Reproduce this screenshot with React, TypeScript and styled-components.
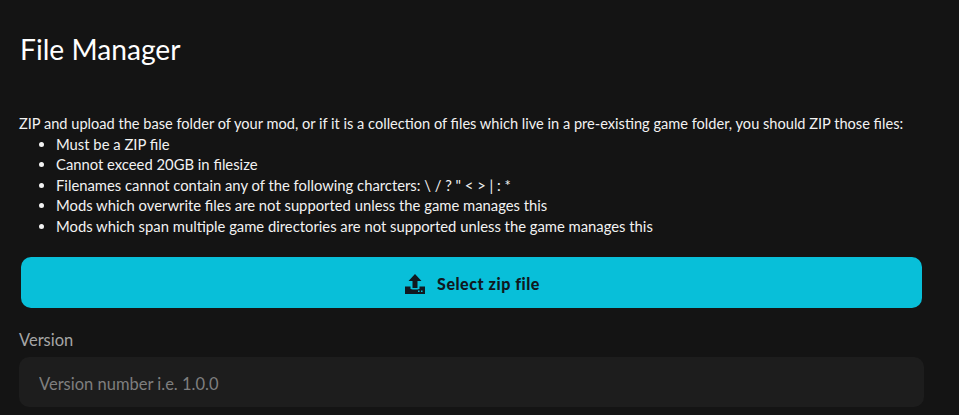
import styled, { createGlobalStyle } from "styled-components";

const GlobalStyle = createGlobalStyle`
  html, body {
    margin: 0;
    height: 100%;
    overflow: hidden;
    background: #141414;
  }
  body {
    font-family: Lato, "Liberation Sans", sans-serif;
    color: #fff;
  }
`;

const Page = styled.div`
  display: flex;
  flex-direction: column;
  padding: 30px 35px 0 19px;
`;

const Title = styled.h1`
  margin: 0 0 0 1px;
  font-size: 28.2px;
  line-height: 38px;
  font-weight: 400;
  color: #fff;
`;

const Intro = styled.p`
  margin: 46px 0 0;
  font-size: 14.6px;
  line-height: 19.5px;
  color: #f2f2f2;
`;

const Rules = styled.ul`
  margin: 0;
  padding: 0 0 0 37px;
  font-size: 14.8px;
  line-height: 20.5px;
  color: #f2f2f2;
`;

const SelectButton = styled.button`
  display: flex;
  align-items: center;
  justify-content: center;
  gap: 12px;
  width: 901px;
  height: 51px;
  margin: 21px 0 0 2px;
  padding: 2px 0 0 2px;
  border: 0;
  border-radius: 10px;
  background: #08bfd9;
  color: #101820;
  font-family: Lato, sans-serif;
  font-size: 16px;
  font-weight: 900;
  letter-spacing: 0.55px;
`;

const Label = styled.label`
  margin-top: 22px;
  font-size: 16.5px;
  line-height: 20px;
  color: #a6a6a6;
`;

const VersionInput = styled.input`
  box-sizing: border-box;
  width: 905px;
  height: 50px;
  margin-top: 7px;
  padding: 3px 20px 0;
  border: 0;
  border-radius: 10px;
  background: #1d1d1d;
  font-family: Lato, sans-serif;
  font-size: 16.5px;
  color: #fff;
  &::placeholder {
    color: #7f7f7f;
    opacity: 1;
  }
`;

const UploadIcon = () => (
  <svg width="20" height="20" viewBox="0 0 20 20" fill="#101820">
    <path d="M10 0 L16.5 7 H12.5 V14 H7.5 V7 H3.5 Z" />
    <path d="M0 12.5 H5.5 V15 Q10 16 14.5 15 V12.5 H20 V20 H0 Z" />
    <rect x="13" y="16.5" width="1.5" height="1.5" fill="#08bfd9" />
    <rect x="16" y="16.5" width="1.5" height="1.5" fill="#08bfd9" />
  </svg>
);

export default function App() {
  return (
    <Page>
      <GlobalStyle />
      <Title>File Manager</Title>
      <Intro>
        ZIP and upload the base folder of your mod, or if it is a collection of files which live in a
        pre-existing game folder, you should ZIP those files:
      </Intro>
      <Rules>
        <li>Must be a ZIP file</li>
        <li>Cannot exceed 20GB in filesize</li>
        <li>Filenames cannot contain any of the following charcters: \ / ? " &lt; &gt; | : *</li>
        <li>Mods which overwrite files are not supported unless the game manages this</li>
        <li>Mods which span multiple game directories are not supported unless the game manages this</li>
      </Rules>
      <SelectButton type="button">
        <UploadIcon />
        Select zip file
      </SelectButton>
      <Label htmlFor="version">Version</Label>
      <VersionInput id="version" placeholder="Version number i.e. 1.0.0" />
    </Page>
  );
}
